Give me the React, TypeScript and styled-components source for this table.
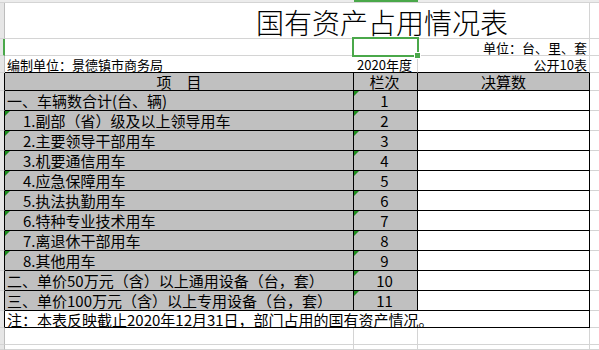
import styled, { createGlobalStyle, css } from 'styled-components';

const GRID = '#d4d4d4';
const INK = '#000';
const GREEN = '#4aa84a';
const TICK = '#1c8c1c';
const SHADE = '#c0c0c0';

const GlobalStyle = createGlobalStyle`
  html, body {
    margin: 0;
    padding: 0;
    background: #fff;
  }
  body {
    font-family: "Noto Sans CJK SC", "Liberation Sans", sans-serif;
    color: #000;
  }
`;

const Sheet = styled.div`
  width: 599px;
  height: 350px;
  overflow: hidden;
  display: flex;
  flex-direction: column;
`;

const Row = styled.div<{ $h?: number }>`
  display: flex;
  flex-shrink: 0;
  height: ${(p) => (p.$h ? `${p.$h}px` : 'auto')};
  ${(p) => !p.$h && css`flex: 1;`}
`;

const RowHead = styled.div<{ $active?: boolean; $edge?: string }>`
  box-sizing: border-box;
  width: 5px;
  flex-shrink: 0;
  background: #e6e6e6;
  border-right: 1px solid ${(p) => p.$edge ?? '#bdbdbd'};
  border-bottom: 1px solid ${GRID};
  ${(p) =>
    p.$active &&
    css`
      border-right: 2px solid ${GREEN};
    `}
`;

type Align = 'left' | 'center' | 'right';

const Cell = styled.div<{
  $w?: number;
  $right?: string | null;
  $bottom?: string;
  $bg?: string;
  $align?: Align;
  $size?: number;
  $indent?: number;
  $tick?: boolean;
}>`
  position: relative;
  box-sizing: border-box;
  ${(p) => (p.$w ? css`width: ${p.$w}px; flex-shrink: 0;` : css`flex: 1;`)}
  display: flex;
  align-items: center;
  justify-content: ${(p) =>
    p.$align === 'center' ? 'center' : p.$align === 'right' ? 'flex-end' : 'flex-start'};
  border-right: ${(p) => (p.$right === null ? 'none' : `1px solid ${p.$right ?? GRID}`)};
  border-bottom: 1px solid ${(p) => p.$bottom ?? GRID};
  background: ${(p) => p.$bg ?? '#fff'};
  font-size: ${(p) => p.$size ?? 15}px;
  line-height: 1;
  white-space: nowrap;
  padding-left: ${(p) => p.$indent ?? 2}px;
  padding-right: 2px;

  ${(p) =>
    p.$tick &&
    css`
      &::before {
        content: '';
        position: absolute;
        top: 0;
        left: 0;
        width: 0;
        height: 0;
        border-top: 5px solid ${TICK};
        border-right: 5px solid transparent;
      }
    `}
`;

const ColHeadStrip = styled.div<{ $w?: number; $active?: boolean }>`
  box-sizing: border-box;
  ${(p) => (p.$w ? css`width: ${p.$w}px; flex-shrink: 0;` : css`flex: 1;`)}
  background: #ececec;
  border-bottom: 1px solid ${GRID};
  ${(p) =>
    p.$active &&
    css`
      border-top: 2px solid ${GREEN};
    `}
`;

const Title = styled(Cell)`
  font-size: 28px;
  font-weight: 300;
  padding-left: 251px;
  padding-top: 2px;
`;

const Selection = styled.div`
  position: absolute;
  left: -2px;
  top: -2px;
  width: 67px;
  height: 20px;
  box-sizing: border-box;
  border: 2px solid ${GREEN};
  z-index: 2;
`;

const Handle = styled.div`
  position: absolute;
  right: -4px;
  bottom: -4px;
  width: 5px;
  height: 5px;
  background: ${GREEN};
  border: 1px solid #fff;
`;

const COL_A = 349;
const COL_B = 64;
const COL_C = 172;

type Item = { label: string; sub?: boolean };

const items: Item[] = [
  { label: '一、车辆数合计(台、辆)' },
  { label: '1.副部（省）级及以上领导用车', sub: true },
  { label: '2.主要领导干部用车', sub: true },
  { label: '3.机要通信用车', sub: true },
  { label: '4.应急保障用车', sub: true },
  { label: '5.执法执勤用车', sub: true },
  { label: '6.特种专业技术用车', sub: true },
  { label: '7.离退休干部用车', sub: true },
  { label: '8.其他用车', sub: true },
  { label: '二、单价50万元（含）以上通用设备（台，套）' },
  { label: '三、单价100万元（含）以上专用设备（台，套）' },
];

const App = () => {
  return (
    <>
      <GlobalStyle />
      <Sheet>
        <Row $h={3}>
          <ColHeadStrip $w={5} />
          <ColHeadStrip $w={COL_A} />
          <ColHeadStrip $w={COL_B} $active />
          <ColHeadStrip $w={COL_C} />
          <ColHeadStrip />
        </Row>

        <Row $h={36}>
          <RowHead />
          <Title $w={COL_A + COL_B + COL_C}>国有资产占用情况表</Title>
          <Cell $right={null} />
        </Row>

        <Row $h={17}>
          <RowHead $active />
          <Cell $w={COL_A} $right={null} />
          <Cell $w={COL_B}>
            <Selection>
              <Handle />
            </Selection>
          </Cell>
          <Cell $w={COL_C} $align="right" $size={13}>
            单位：台、里、套
          </Cell>
          <Cell $right={null} />
        </Row>

        <Row $h={17}>
          <RowHead />
          <Cell $w={COL_A} $right={null} $bottom={INK} $size={13}>
            编制单位：景德镇市商务局
          </Cell>
          <Cell $w={COL_B} $bottom={INK} $align="center" $size={13} $indent={0}>
            2020年度
          </Cell>
          <Cell $w={COL_C} $bottom={INK} $align="right" $size={13}>
            公开10表
          </Cell>
          <Cell $right={null} />
        </Row>

        <Row $h={18}>
          <RowHead $edge={INK} />
          <Cell $w={COL_A} $right={INK} $bottom={INK} $bg={SHADE} $align="center">
            项　目
          </Cell>
          <Cell $w={COL_B} $right={INK} $bottom={INK} $bg={SHADE} $align="center" $indent={0}>
            栏次
          </Cell>
          <Cell $w={COL_C} $right={INK} $bottom={INK} $bg={SHADE} $align="center">
            决算数
          </Cell>
          <Cell $right={null} />
        </Row>

        {items.map((item, i) => (
          <Row $h={20} key={item.label}>
            <RowHead $edge={INK} />
            <Cell
              $w={COL_A}
              $right={INK}
              $bottom={INK}
              $bg={SHADE}
              $indent={item.sub ? 18 : 2}
              $tick={item.sub}
            >
              {item.label}
            </Cell>
            <Cell $w={COL_B} $right={INK} $bottom={INK} $bg={SHADE} $align="center" $indent={0} $tick>
              {i + 1}
            </Cell>
            <Cell $w={COL_C} $right={INK} $bottom={INK} />
            <Cell $right={null} />
          </Row>
        ))}

        <Row $h={17}>
          <RowHead $edge={INK} />
          <Cell $w={COL_A + COL_B + COL_C} $right={INK} $bottom={INK}>
            注：本表反映截止2020年12月31日，部门占用的国有资产情况。
          </Cell>
          <Cell $right={null} />
        </Row>

        <Row $h={17}>
          <RowHead />
          <Cell $w={COL_A} />
          <Cell $w={COL_B} />
          <Cell $w={COL_C} />
          <Cell $right={null} />
        </Row>

        <Row>
          <RowHead />
          <Cell $w={COL_A} />
          <Cell $w={COL_B} />
          <Cell $w={COL_C} />
          <Cell $right={null} />
        </Row>
      </Sheet>
    </>
  );
};

export default App;
